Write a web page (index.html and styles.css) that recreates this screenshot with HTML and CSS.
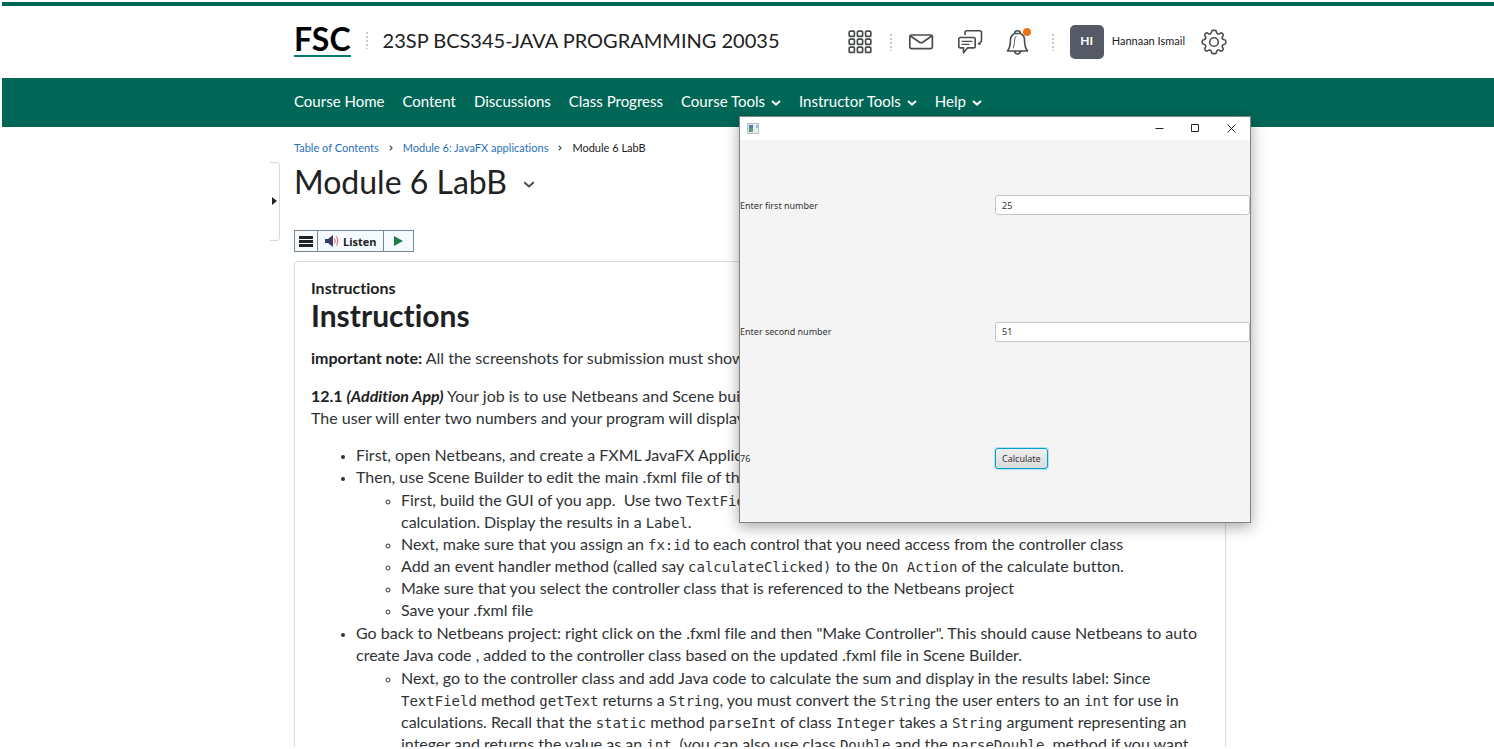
FILE: index.html
```html
<!DOCTYPE html>
<html lang="en">
<head>
<meta charset="utf-8">
<title>Module 6 LabB</title>
<link rel="stylesheet" href="styles.css">
</head>
<body>
<div class="page">
  <header class="header">
    <a class="logo" href="#">FSC</a>
    <span class="dots"></span>
    <a class="course" href="#">23SP BCS345-JAVA PROGRAMMING 20035</a>
    <div class="tools">
      <button class="icon-btn" aria-label="Select a course">
        <svg width="24" height="24" viewBox="0 0 24 24" fill="none" stroke="#494c4e" stroke-width="1.7"><rect x="1.2" y="1.2" width="5.2" height="5.2" rx="1"/><rect x="9.4" y="1.2" width="5.2" height="5.2" rx="1"/><rect x="17.6" y="1.2" width="5.2" height="5.2" rx="1"/><rect x="1.2" y="9.2" width="5.2" height="5.2" rx="1"/><rect x="9.4" y="9.2" width="5.2" height="5.2" rx="1"/><rect x="17.6" y="9.2" width="5.2" height="5.2" rx="1"/><rect x="1.2" y="17.2" width="5.2" height="5.2" rx="1"/><rect x="9.4" y="17.2" width="5.2" height="5.2" rx="1"/><rect x="17.6" y="17.2" width="5.2" height="5.2" rx="1"/></svg>
      </button>
      <span class="dots"></span>
      <button class="icon-btn" aria-label="Message alerts">
        <svg width="26" height="24" viewBox="0 0 26 24" fill="none" stroke="#494c4e" stroke-width="1.7" stroke-linejoin="round"><rect x="1.8" y="5" width="22.6" height="13.6" rx="1.6"/><path d="M2.500 6l8.600 6q2 1.400 4 0l8.600-6"/></svg>
      </button>
      <button class="icon-btn" aria-label="Subscription alerts">
        <svg width="26" height="26" viewBox="0 0 26 26" fill="none" stroke="#494c4e" stroke-width="1.6" stroke-linejoin="round" stroke-linecap="round"><path d="M8 5.500V3.500q0-1.700 1.700-1.700h13.100q1.700 0 1.700 1.700v8q0 1.800-1.500 1.800l-.1 2-1.500-.8"/><path d="M3.500 8.500h13q1.700 0 1.700 1.700v7q0 1.700-1.700 1.700H10.500L6.500 23.800v-4.900h-3q-1.700 0-1.700-1.700v-7q0-1.700 1.700-1.700z"/><path d="M5 12.300h10M5 15.300h7" stroke-width="1.200"/></svg>
      </button>
      <button class="icon-btn" aria-label="Update alerts">
        <svg width="24" height="26" viewBox="0 0 24 26" fill="none" stroke="#494c4e" stroke-width="1.6" stroke-linejoin="round" stroke-linecap="round"><path d="M8.500 4.500q0-2.700 3-2.700t3 2.700M8.500 4.500Q4.500 6.200 4.500 11q0 7-3 11h20q-3-4-3-11 0-4.800-4-6.500z"/><path d="M8.500 22.200q.5 2.800 3 2.800t3-2.800"/><path d="M7.300 19q1.200-3 1.200-7 0-3 1.500-4.500" stroke-width=".9"/></svg>
        <span class="badge"></span>
      </button>
      <span class="dots"></span>
      <button class="user"><span class="avatar">HI</span><span class="name">Hannaan Ismail</span></button>
      <button class="icon-btn" aria-label="Admin tools">
        <svg width="26" height="26" viewBox="0 0 26 26" fill="none" stroke="#494c4e" stroke-width="1.6" stroke-linejoin="round"><path d="M10.500 2.900q.2-1.500 1.500-1.500h2q1.300 0 1.500 1.500.3 1.600 1.300 2 1 .4 2.300-.6 1.200-.9 2.100 0l.700.700q.9.900 0 2.100-1 1.300-.6 2.300t2 1.300q1.500.2 1.500 1.500v1.600q0 1.300-1.500 1.500-1.600.3-2 1.300-.4 1 .6 2.300.9 1.200 0 2.100l-.7.700q-.9.900-2.100 0-1.300-1-2.300-.6t-1.300 2q-.2 1.500-1.500 1.500h-2q-1.300 0-1.500-1.500-.3-1.600-1.300-2-1-.4-2.300.6-1.200.9-2.100 0l-.7-.7q-.9-.9 0-2.100 1-1.300.6-2.300t-2-1.300q-1.500-.2-1.500-1.500v-1.600q0-1.300 1.500-1.500 1.600-.3 2-1.300.4-1-.6-2.300-.9-1.200 0-2.100l.7-.7q.9-.9 2.100 0 1.300 1 2.300.6t1.300-2z"/><circle cx="13" cy="13" r="4.300"/></svg>
      </button>
    </div>
  </header>
  <nav class="nav">
    <a href="#">Course Home</a>
    <a href="#">Content</a>
    <a href="#">Discussions</a>
    <a href="#">Class Progress</a>
    <button>Course Tools <svg class="chev" viewBox="0 0 10 6"><path d="M1 1l4 3.600L9 1"/></svg></button>
    <button>Instructor Tools <svg class="chev" viewBox="0 0 10 6"><path d="M1 1l4 3.600L9 1"/></svg></button>
    <button>Help <svg class="chev" viewBox="0 0 10 6"><path d="M1 1l4 3.600L9 1"/></svg></button>
  </nav>
  <div class="body">
    <aside class="side"><button class="handle" aria-label="Open side panel"><svg width="5" height="8" viewBox="0 0 5 8"><path d="M0 0l5 4-5 4z" fill="#202122"/></svg></button></aside>
    <main class="main">
      <div class="crumbs">
        <a href="#">Table of Contents</a>
        <svg width="4" height="6" viewBox="0 0 4 6"><path d="M.7.7L3 3 .7 5.300"/></svg>
        <a href="#">Module 6: JavaFX applications</a>
        <svg width="4" height="6" viewBox="0 0 4 6"><path d="M.7.7L3 3 .7 5.300"/></svg>
        <span>Module 6 LabB</span>
      </div>
      <h1 class="title">Module 6 LabB <button class="title-btn" aria-label="Actions"><svg width="12" height="7" viewBox="0 0 12 7"><path d="M1.200 1.200L6 5.400l4.800-4.200"/></svg></button></h1>
      <div class="listen">
        <button aria-label="Reader menu"><svg width="14" height="11" viewBox="0 0 14 11"><path d="M0 0h14v3H0zM0 4h14v3H0zM0 8h14v3H0z" fill="#202122"/></svg></button>
        <button><svg width="14" height="12" viewBox="0 0 14 12"><path d="M0 4h3l5-4v12L3 8H0z" fill="#3a3a66"/><path d="M9.500 3.500q1.500 2.500 0 5M11.500 1.500q2.800 4.500 0 9" fill="none" stroke="#ee5a4f"/></svg>Listen</button>
        <button aria-label="Play"><svg width="9" height="10" viewBox="0 0 9 10"><path d="M0 0l9 5-9 5z" fill="#1d7f45"/></svg></button>
      </div>
      <article class="card">
        <div class="small-head">Instructions</div>
        <h2>Instructions</h2>
        <p><b>important note:</b> All the screenshots for submission must show t</p>
        <p><b>12.1 <i>(Addition App)</i></b> Your job is to use Netbeans and Scene build<br>The user will enter two numbers and your program will display t</p>
        <ul class="list">
          <li>First, open Netbeans, and create a FXML JavaFX Applicat</li>
          <li>Then, use Scene Builder to edit the main .fxml file of the
            <ul>
              <li>First, build the GUI of you app.&nbsp; Use two <code>TextFiel</code><br>calculation. Display the results in a <code>Label</code>.</li>
              <li>Next, make sure that you assign an <code>fx:id</code> to each control that you need access from the controller class</li>
              <li>Add an event handler method (called say <code>calculateClicked)</code> to the <code>On Action</code> of the calculate button.</li>
              <li>Make sure that you select the controller class that is referenced to the Netbeans project</li>
              <li>Save your .fxml file</li>
            </ul>
          </li>
          <li>Go back to Netbeans project: right click on the .fxml file and then "Make Controller". This should cause Netbeans to auto create Java code , added to the controller class based on the updated .fxml file in Scene Builder.
            <ul>
              <li>Next, go to the controller class and add Java code to calculate the sum and display in the results label: Since <code>TextField</code> method <code>getText</code> returns a <code>String</code>, you must convert the <code>String</code> the user enters to an <code>int</code> for use in calculations. Recall that the <code>static</code> method <code>parseInt</code> of class <code>Integer</code> takes a <code>String</code> argument representing an integer and returns the value as an <code>int</code>. (you can also use class <code>Double</code> and the <code>parseDouble</code>&nbsp; method if you want</li>
            </ul>
          </li>
        </ul>
      </article>
    </main>
  </div>
  <section class="window">
    <div class="titlebar">
      <svg class="app-icon" width="12" height="11" viewBox="0 0 12 11"><rect x=".5" y=".5" width="11" height="10" fill="#e8ecee" stroke="#b5bcc2"/><path d="M2 2h4v7H2z" fill="#4b7f91"/><path d="M3 5h3v4H3z" fill="#58a07c"/><path d="M9 2h2v3H9z" fill="#9fb4c4"/></svg>
      <button aria-label="Minimize"><svg width="9" height="9" viewBox="0 0 9 9"><path d="M.5 4.500h8"/></svg></button>
      <button aria-label="Maximize"><svg width="9" height="9" viewBox="0 0 9 9"><path d="M.500 .500h7v7h-7z"/></svg></button>
      <button aria-label="Close"><svg width="9" height="9" viewBox="0 0 9 9"><path d="M.5.500l8 8M8.500.500l-8 8"/></svg></button>
    </div>
    <form class="grid">
      <label for="n1">Enter first number</label><input id="n1" type="text" value="25">
      <label for="n2">Enter second number</label><input id="n2" type="text" value="51">
      <output for="n1 n2">76</output><button type="button" class="calc">Calculate</button>
    </form>
  </section>
</div>
</body>
</html>
```

FILE: styles.css
```css
* { box-sizing: border-box; }
body { margin: 0; background: #fff; color: #202122; font-family: Lato, "Open Sans", sans-serif; font-variant-ligatures: none; }
button { font: inherit; color: inherit; background: none; border: 0; padding: 0; }
a { text-decoration: none; color: inherit; }
svg { display: block; flex: none; }

.page { height: 100vh; overflow: hidden; display: flex; flex-direction: column; padding: 2px 0 2px 2px; }

.header { flex: none; border-top: 4px solid #006757; height: 76px; padding: 0 267px 4px 292px; display: flex; align-items: center; white-space: nowrap; }
.logo { font-size: 32px; line-height: 32px; font-weight: 700; color: #000; border-bottom: 2px solid #00796f; }
.dots { width: 2px; height: 18px; flex: none; background: radial-gradient(circle, #c3cad3 1px, transparent 1px) 0 0 / 2px 4px; }
.logo + .dots { margin: 0 15px; }
.course { font-size: 20px; }
.tools { margin: 3px 0 0 auto; display: flex; align-items: center; gap: 16px; }
.tools .dots { margin-left: 6px; }
.tools .icon-btn:first-child + .dots { margin-left: 2px; }
.icon-btn { position: relative; }
.icon-btn + .icon-btn { margin-left: 7px; }
.badge { position: absolute; top: -1px; right: -1px; width: 8px; height: 8px; border-radius: 50%; background: #e87511; }
.user { display: flex; align-items: center; gap: 8px; font-size: 11px; }
.name { padding-bottom: 3px; }
.avatar { width: 34px; height: 34px; padding-bottom: 3px; border-radius: 5px; background: #565a66; color: #fff; font-size: 12px; font-weight: 700; display: flex; align-items: center; justify-content: center; }

.nav { flex: none; height: 49px; background: #006757; color: #fff; padding: 0 266px 3px 292px; display: flex; align-items: center; gap: 18px; font-size: 15px; white-space: nowrap; }
.nav button { display: flex; align-items: center; gap: 6px; }
.chev { width: 10px; height: 6px; margin-top: 4px; fill: none; stroke: #fff; stroke-width: 2; }

.body { flex: 1; min-height: 0; display: flex; padding-right: 268px; overflow: hidden; }
.side { width: 292px; flex: none; display: flex; justify-content: flex-end; align-items: flex-start; padding: 35px 14px 0 0; }
.handle { width: 10px; height: 79px; border: 1px solid #d3d9e3; border-left: 0; border-radius: 0 4px 4px 0; display: flex; align-items: center; padding: 0 0 2px 2px; }
.main { flex: 1; min-width: 0; }
.crumbs { display: flex; align-items: center; gap: 10px; font-size: 11px; line-height: 16px; padding-top: 13px; }
.crumbs a { color: #1f70b8; }
.crumbs svg { fill: none; stroke: #494c4e; stroke-width: 1.2; }
.title { margin: 8px 0 0; font-size: 32px; line-height: 36px; font-weight: 400; display: flex; align-items: center; gap: 16px; }
.title-btn svg { margin-top: 4px; fill: none; stroke: #494c4e; stroke-width: 2; }
.listen { display: flex; width: max-content; margin-top: 30px; border: 1px solid #7c868f; background: #f5fafe; height: 22px; font: 700 11px "Open Sans", sans-serif; }
.listen button { display: flex; align-items: center; gap: 4px; padding: 0 4px; }
.listen button + button { border-left: 1px solid #7c868f; padding: 0 6px 0 7px; }
.listen button:last-child { padding: 0 10px; }

.card { margin-top: 9px; border: 1px solid #d8dce0; border-radius: 4px; padding: 15px 16px; font-size: 16px; line-height: 22px; color: #303336; }
.small-head { font-weight: 700; color: #202122; }
.card h2 { margin: 0; font-size: 30px; line-height: 32px; font-weight: 700; color: #202122; }
.card p { margin: 16px 0 15px; }
.card b { color: #202122; }
.card ul { margin: 0; padding-left: 45px; }
.card li ul { margin-top: 1px; padding-bottom: 1px; }
.card li::marker { font-size: 12px; }
.card code { font: 14px/16px "DejaVu Sans Mono", monospace; }

.window { position: absolute; left: 739px; top: 116px; width: 512px; height: 407px; border: 1px solid #808487; background: #f4f4f4; box-shadow: 0 4px 14px rgba(0, 0, 0, 0.35); display: flex; flex-direction: column; font-family: "Noto Sans", "Open Sans", sans-serif; font-size: 9px; color: #333; }
.titlebar { flex: none; height: 23px; background: #fff; display: flex; align-items: center; gap: 27px; padding: 0 14px 1px 7px; }
.app-icon { margin-right: auto; }
.titlebar button svg { fill: none; stroke: #222; }
.grid { flex: 1; display: grid; grid-template-columns: 1fr 1fr; grid-template-rows: repeat(3, 1fr); align-items: center; padding-top: 2px; }
.grid input { width: 100%; height: 20px; border: 1px solid #c4c4c4; border-radius: 3px; padding: 0 6px; font: inherit; color: #333; background: #fff; }
.calc { justify-self: start; height: 21px; padding: 0 6px; border: 1px solid #039ed3; border-radius: 3px; background: linear-gradient(#efefef, #dadada); box-shadow: 0 0 0 1px #b5e0f0; }
```
